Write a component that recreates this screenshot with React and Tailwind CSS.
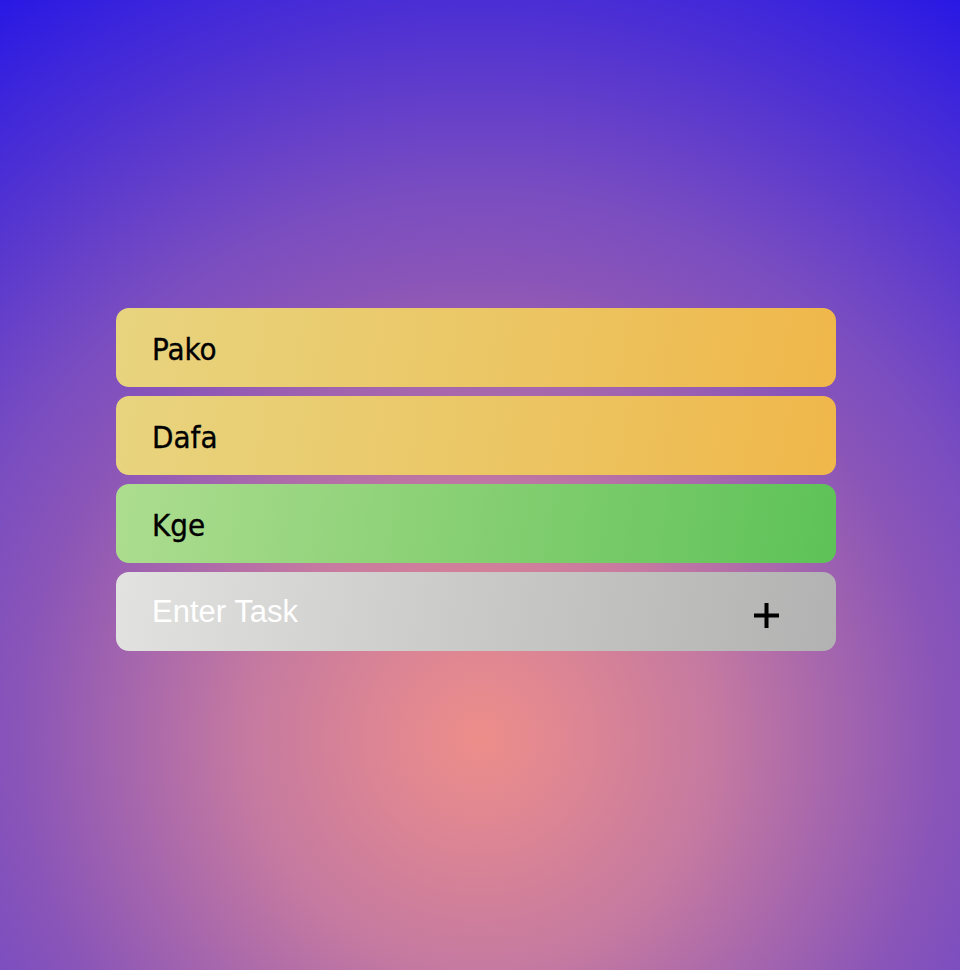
import React from "react";

const tasks = [
  { name: "Pako", bg: "bg-[linear-gradient(100deg,#e8d47f_0%,#ebc766_50%,#f0b74a_100%)]" },
  { name: "Dafa", bg: "bg-[linear-gradient(100deg,#e8d47f_0%,#ebc766_50%,#f0b74a_100%)]" },
  { name: "Kge", bg: "bg-[linear-gradient(100deg,#addd90_0%,#86cf72_50%,#5dc258_100%)]" },
];

export default function App() {
  return (
    <div className="w-full h-[970px] overflow-hidden bg-[radial-gradient(circle_at_50%_76%,#ee8e8a_0px,#c67aa0_230px,#8a55b8_460px,#7a4dc0_545px,#2818e4_880px)]">
      <div className="w-[720px] ml-[116px] pt-[308px] flex flex-col gap-[9px]">
        {tasks.map((t) => (
          <div
            key={t.name}
            className={`h-[79px] rounded-[13px] flex items-center pl-[36px] ${t.bg}`}
          >
            <span className="text-[31px] leading-none text-black font-['DejaVu_Sans_Condensed','DejaVu_Sans',sans-serif] [font-stretch:condensed] [-webkit-text-stroke:0.35px_black] pt-[3px]">
              {t.name}
            </span>
          </div>
        ))}
        <div className="h-[79px] rounded-[13px] flex items-center pl-[36px] pr-[57px] bg-[linear-gradient(100deg,#e2e2e0_0%,#c9c9c7_50%,#b2b2b2_100%)]">
          <input
            type="text"
            placeholder="Enter Task"
            className="flex-1 bg-transparent outline-none border-0 text-[31px] leading-none text-black placeholder:text-white font-['Liberation_Sans',Arial,sans-serif]"
          />
          <button className="w-[25px] h-[25px] mt-[7px] flex items-center justify-center">
            <svg width="25" height="25" viewBox="0 0 25 25">
              <path d="M12.5 0v25M0 12.5h25" stroke="#000" strokeWidth="4" />
            </svg>
          </button>
        </div>
      </div>
    </div>
  );
}
